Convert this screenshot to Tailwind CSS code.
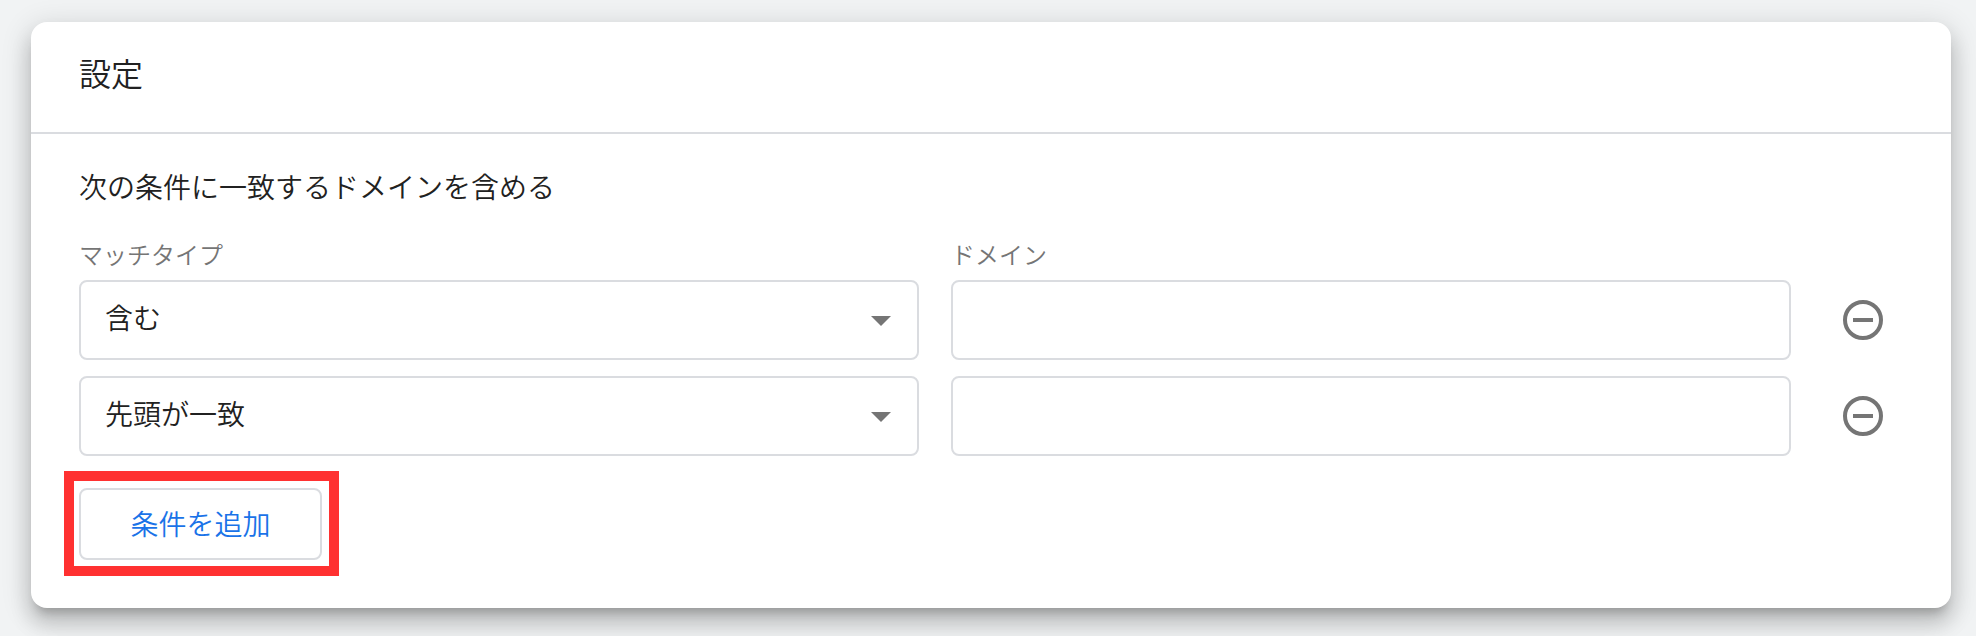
<!DOCTYPE html>
<html lang="ja">
<head>
<meta charset="utf-8">
<meta name="viewport" content="width=device-width, initial-scale=1">
<title>設定</title>
<script src="https://cdn.jsdelivr.net/npm/@tailwindcss/browser@4"></script>
</head>
<body class="bg-[#f1f3f4] pt-[22px] pr-[25px] pb-7 pl-[31px] font-['Noto_Sans_CJK_JP',sans-serif] font-[350] text-[#212121]">
<main class="rounded-2xl bg-white shadow-[0_10px_10px_-6px_rgba(0,0,0,0.2),0_16px_20px_2px_rgba(0,0,0,0.14),0_6px_28px_4px_rgba(0,0,0,0.12)]">
  <header class="border-b-2 border-[#dadce0] px-12 pt-[26px] pb-9">
    <h1 class="text-[32px] leading-[48px] font-[350]">設定</h1>
  </header>
  <form class="pt-[30px] pr-14 pb-12 pl-12 text-[28px]">
    <h2 class="leading-[44px] font-[350]">次の条件に一致するドメインを含める</h2>
    <div class="mt-[30px] grid grid-cols-[1fr_1fr_auto] items-center gap-x-8">
      <label for="match-1" class="text-2xl leading-8 text-[#757575]">マッチタイプ</label>
      <label for="domain-1" class="col-span-2 text-2xl leading-8 text-[#757575]">ドメイン</label>

      <div class="relative mt-[10px]">
        <select id="match-1" class="block h-20 w-full appearance-none rounded-lg border-2 border-[#dadce0] bg-white pr-16 pb-[6px] pl-6">
          <option>含む</option>
          <option>先頭が一致</option>
        </select>
        <svg class="pointer-events-none absolute top-9 right-7 h-[10px] w-5" viewBox="0 0 20 10" fill="#757575" aria-hidden="true"><path d="M0 0h20L10 10z"/></svg>
      </div>
      <input id="domain-1" type="text" class="mt-[10px] h-20 w-full rounded-lg border-2 border-[#dadce0] px-6">
      <button type="button" aria-label="条件を削除" class="mt-[10px] ml-2 flex size-16 items-center justify-center">
        <svg class="size-12" viewBox="0 0 48 48" fill="none" stroke="#757575" stroke-width="4" aria-hidden="true"><circle cx="24" cy="24" r="18"/><path d="M14 24h20"/></svg>
      </button>

      <div class="relative mt-4">
        <select id="match-2" aria-label="マッチタイプ" class="block h-20 w-full appearance-none rounded-lg border-2 border-[#dadce0] bg-white pr-16 pb-[6px] pl-6">
          <option>先頭が一致</option>
          <option>含む</option>
        </select>
        <svg class="pointer-events-none absolute top-9 right-7 h-[10px] w-5" viewBox="0 0 20 10" fill="#757575" aria-hidden="true"><path d="M0 0h20L10 10z"/></svg>
      </div>
      <input id="domain-2" type="text" aria-label="ドメイン" class="mt-4 h-20 w-full rounded-lg border-2 border-[#dadce0] px-6">
      <button type="button" aria-label="条件を削除" class="mt-4 ml-2 flex size-16 items-center justify-center">
        <svg class="size-12" viewBox="0 0 48 48" fill="none" stroke="#757575" stroke-width="4" aria-hidden="true"><circle cx="24" cy="24" r="18"/><path d="M14 24h20"/></svg>
      </button>
    </div>
    <div class="relative mt-8 w-fit">
      <button type="button" class="block h-[72px] min-w-[243px] rounded-lg border-2 border-[#dadce0] px-12 pb-[2px] text-[#1a73e8]">条件を追加</button>
      <span class="pointer-events-none absolute -top-[17px] -right-[17px] -bottom-4 -left-[15px] border-[10px] border-[#ff3131]"></span>
    </div>
  </form>
</main>
</body>
</html>
